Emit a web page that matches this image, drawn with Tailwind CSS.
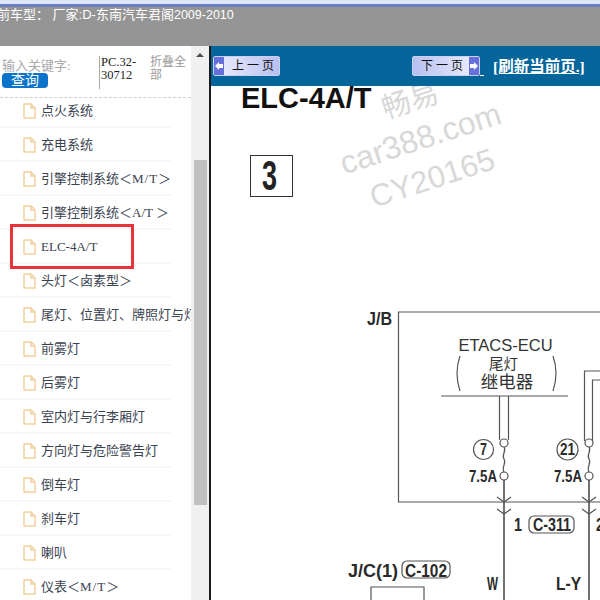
<!DOCTYPE html>
<html lang="zh">
<head>
<meta charset="utf-8">
<script src="https://cdn.jsdelivr.net/npm/@tailwindcss/browser@4"></script>
</head>
<body class="w-[600px] h-[600px] overflow-hidden bg-white font-['Liberation_Serif','Noto_Sans_CJK_SC',serif]">
<div class="flex flex-col h-[600px]">
  <!-- top -->
  <div class="h-[4px] bg-[#dce6f7]"></div>
  <div class="h-[3px] bg-[#6a7fc6]"></div>
  <div class="h-[39px] bg-[#959595] overflow-hidden pt-[1px]">
    <div class="text-white text-[13px] leading-[14px] whitespace-nowrap ml-[-3px] font-['Liberation_Sans','Noto_Sans_CJK_SC',sans-serif]">前车型： 厂家:D-东南汽车君阁<span class="text-[12.500px]">2009-2010</span></div>
  </div>
  <div class="flex h-[554px]">
    <!-- sidebar -->
    <div class="w-[191px] h-full overflow-hidden flex flex-col">
      <div class="h-[52px] flex-none border-b border-dashed border-[#cfcfcf] flex">
        <div class="w-[99px] pt-[13px] pl-[2px]">
          <div class="text-[#a8a8a8] text-[13px] leading-[14px] whitespace-nowrap">输入关键字:</div>
          <div class="w-[46px] h-[15px] bg-[#0b73c9] rounded-[4px] text-white text-[14px] leading-[15px] text-center">查询</div>
        </div>
        <div class="w-[51px] h-[33px] mt-[10px] border-l border-[#a8a8a8] pl-[1px] text-[12.500px] leading-[13px] text-[#222]">PC.32-<br>30712</div>
        <div class="w-[40px] pt-[10px] text-[#999] text-[12px] leading-[13px]">折叠全部</div>
      </div>
      <div class="flex-1 overflow-hidden text-[#3a4250] text-[13px]">
        <div class="h-[30px] flex items-center pl-[23px] pb-[2px] border-b-2 border-[#f7f7f7] w-[171px] whitespace-nowrap"><svg class="flex-none mr-[5px]" width="13" height="16" viewBox="0 0 13 16" fill="none" stroke="#f2cf9f" stroke-width="1.5"><path d="M1 1h7l4 4v10H1z"/><path d="M8 1v4h4"/></svg>点火系统</div>
        <div class="h-[34px] flex items-center pl-[23px] pt-[2px] border-b-2 border-[#f7f7f7] w-[171px] whitespace-nowrap"><svg class="flex-none mr-[5px]" width="13" height="16" viewBox="0 0 13 16" fill="none" stroke="#f2cf9f" stroke-width="1.5"><path d="M1 1h7l4 4v10H1z"/><path d="M8 1v4h4"/></svg>充电系统</div>
        <div class="h-[34px] flex items-center pl-[23px] pt-[2px] border-b-2 border-[#f7f7f7] w-[171px] whitespace-nowrap"><svg class="flex-none mr-[5px]" width="13" height="16" viewBox="0 0 13 16" fill="none" stroke="#f2cf9f" stroke-width="1.5"><path d="M1 1h7l4 4v10H1z"/><path d="M8 1v4h4"/></svg>引擎控制系统＜<span class="tracking-[1px]">M/T</span>＞</div>
        <div class="h-[34px] flex items-center pl-[23px] pt-[2px] border-b-2 border-[#f7f7f7] w-[171px] whitespace-nowrap"><svg class="flex-none mr-[5px]" width="13" height="16" viewBox="0 0 13 16" fill="none" stroke="#f2cf9f" stroke-width="1.5"><path d="M1 1h7l4 4v10H1z"/><path d="M8 1v4h4"/></svg>引擎控制系统＜A/T ＞</div>
        <div class="h-[34px] flex items-center pl-[23px] pt-[2px] border-b-2 border-[#f7f7f7] w-[171px] whitespace-nowrap"><svg class="flex-none mr-[5px]" width="13" height="16" viewBox="0 0 13 16" fill="none" stroke="#f2cf9f" stroke-width="1.5"><path d="M1 1h7l4 4v10H1z"/><path d="M8 1v4h4"/></svg>ELC-4A/T</div>
        <div class="h-[34px] flex items-center pl-[23px] pt-[2px] border-b-2 border-[#f7f7f7] w-[171px] whitespace-nowrap"><svg class="flex-none mr-[5px]" width="13" height="16" viewBox="0 0 13 16" fill="none" stroke="#f2cf9f" stroke-width="1.5"><path d="M1 1h7l4 4v10H1z"/><path d="M8 1v4h4"/></svg>头灯＜卤素型＞</div>
        <div class="h-[34px] flex items-center pl-[23px] pt-[2px] border-b-2 border-[#f7f7f7] w-[171px] whitespace-nowrap"><svg class="flex-none mr-[5px]" width="13" height="16" viewBox="0 0 13 16" fill="none" stroke="#f2cf9f" stroke-width="1.5"><path d="M1 1h7l4 4v10H1z"/><path d="M8 1v4h4"/></svg>尾灯、位置灯、牌照灯与灯</div>
        <div class="h-[34px] flex items-center pl-[23px] pt-[2px] border-b-2 border-[#f7f7f7] w-[171px] whitespace-nowrap"><svg class="flex-none mr-[5px]" width="13" height="16" viewBox="0 0 13 16" fill="none" stroke="#f2cf9f" stroke-width="1.5"><path d="M1 1h7l4 4v10H1z"/><path d="M8 1v4h4"/></svg>前雾灯</div>
        <div class="h-[34px] flex items-center pl-[23px] pt-[2px] border-b-2 border-[#f7f7f7] w-[171px] whitespace-nowrap"><svg class="flex-none mr-[5px]" width="13" height="16" viewBox="0 0 13 16" fill="none" stroke="#f2cf9f" stroke-width="1.5"><path d="M1 1h7l4 4v10H1z"/><path d="M8 1v4h4"/></svg>后雾灯</div>
        <div class="h-[34px] flex items-center pl-[23px] pt-[2px] border-b-2 border-[#f7f7f7] w-[171px] whitespace-nowrap"><svg class="flex-none mr-[5px]" width="13" height="16" viewBox="0 0 13 16" fill="none" stroke="#f2cf9f" stroke-width="1.5"><path d="M1 1h7l4 4v10H1z"/><path d="M8 1v4h4"/></svg>室内灯与行李厢灯</div>
        <div class="h-[34px] flex items-center pl-[23px] pt-[2px] border-b-2 border-[#f7f7f7] w-[171px] whitespace-nowrap"><svg class="flex-none mr-[5px]" width="13" height="16" viewBox="0 0 13 16" fill="none" stroke="#f2cf9f" stroke-width="1.5"><path d="M1 1h7l4 4v10H1z"/><path d="M8 1v4h4"/></svg>方向灯与危险警告灯</div>
        <div class="h-[34px] flex items-center pl-[23px] pt-[2px] border-b-2 border-[#f7f7f7] w-[171px] whitespace-nowrap"><svg class="flex-none mr-[5px]" width="13" height="16" viewBox="0 0 13 16" fill="none" stroke="#f2cf9f" stroke-width="1.5"><path d="M1 1h7l4 4v10H1z"/><path d="M8 1v4h4"/></svg>倒车灯</div>
        <div class="h-[34px] flex items-center pl-[23px] pt-[2px] border-b-2 border-[#f7f7f7] w-[171px] whitespace-nowrap"><svg class="flex-none mr-[5px]" width="13" height="16" viewBox="0 0 13 16" fill="none" stroke="#f2cf9f" stroke-width="1.5"><path d="M1 1h7l4 4v10H1z"/><path d="M8 1v4h4"/></svg>刹车灯</div>
        <div class="h-[34px] flex items-center pl-[23px] pt-[2px] border-b-2 border-[#f7f7f7] w-[171px] whitespace-nowrap"><svg class="flex-none mr-[5px]" width="13" height="16" viewBox="0 0 13 16" fill="none" stroke="#f2cf9f" stroke-width="1.5"><path d="M1 1h7l4 4v10H1z"/><path d="M8 1v4h4"/></svg>喇叭</div>
        <div class="h-[34px] flex items-center pl-[23px] pt-[2px] border-b-2 border-[#f7f7f7] w-[171px] whitespace-nowrap"><svg class="flex-none mr-[5px]" width="13" height="16" viewBox="0 0 13 16" fill="none" stroke="#f2cf9f" stroke-width="1.5"><path d="M1 1h7l4 4v10H1z"/><path d="M8 1v4h4"/></svg>仪表＜<span class="tracking-[1px]">M/T</span>＞</div>
      </div>
    </div>
    <!-- scrollbar -->
    <div class="w-[18px] h-full bg-[#f0f0f0] flex flex-col items-center">
      <div class="w-0 h-0 mt-[7px] border-l-[4px] border-r-[4px] border-b-[4px] border-l-transparent border-r-transparent border-b-[#505050]"></div>
      <div class="w-[13px] h-[345px] mt-[103px] bg-[#c0c0c0]"></div>
    </div>
    <div class="w-[2px] h-full bg-[#1a1a1a]"></div>
    <!-- main -->
    <div class="flex-1 h-full flex flex-col overflow-hidden">
      <div class="h-[40px] flex-none bg-[#04659b] flex items-start pt-[10px]">
        <div class="ml-[2px] w-[67px] h-[20px] border border-[#c8d0f0] rounded-[2px] bg-gradient-to-r from-[#eef0fc] to-[#b9bff0] flex items-center text-[12px] text-[#111]">
          <span class="w-[10px] h-full bg-[#6670dc] flex items-center justify-center flex-none"><svg width="8" height="8" viewBox="0 0 8 8" fill="#fff"><path d="M0 4l4-4v2h4v4H4v2z"/></svg></span>
          <span class="ml-[8px] whitespace-nowrap">上 一 页</span>
        </div>
        <div class="ml-[132px] w-[68px] h-[20px] border border-[#c8d0f0] rounded-[2px] bg-gradient-to-r from-[#b9bff0] to-[#eef0fc] flex items-center justify-between text-[12px] text-[#111]">
          <span class="ml-[8px] whitespace-nowrap">下 一 页</span>
          <span class="w-[10px] h-full bg-[#6670dc] flex items-center justify-center flex-none"><svg width="8" height="8" viewBox="0 0 8 8" fill="#fff"><path d="M8 4L4 0v2H0v4h4v2z"/></svg></span>
        </div>
        <span class="w-[4px] h-[1px] bg-white mt-[19px]"></span>
        <span class="ml-[9px] mt-[2px] text-white text-[15.500px] leading-[18px] font-bold underline whitespace-nowrap">[刷新当前页.]</span>
      </div>
      <div class="flex-1 overflow-hidden font-['Liberation_Sans','Noto_Sans_CJK_SC',sans-serif]">
        <svg width="389" height="514" viewBox="211 86 389 514" class="block">
          <text x="241" y="108" font-size="29" font-weight="700" fill="#111">ELC-4A/T</text>
          <rect x="250.500" y="155.500" width="42" height="41" fill="none" stroke="#333"/>
          <text x="262" y="190" font-size="42" font-weight="700" fill="#222" textLength="15" lengthAdjust="spacingAndGlyphs">3</text>
          <g fill="#d8d8d8" transform="rotate(-18 420 150)" text-anchor="middle">
            <text x="426" y="110" font-size="29">畅易</text>
            <text x="424" y="150" font-size="32">car388.com</text>
            <text x="423" y="191" font-size="31">CY20165</text>
          </g>
          <g fill="none" stroke="#555" stroke-width="1.200">
            <path d="M600 312H398.500V502H600"/>
            <path d="M441 396H568"/>
            <path d="M499.500 396V440M508.500 396V440"/>
            <path d="M600 371H584.500V441M600 380H592.500V441"/>
            <path d="M460 356q-6 17 0 35M553 356q6 17 0 35"/>
            <circle cx="504" cy="443" r="4"/>
            <circle cx="504" cy="476" r="4"/>
            <circle cx="589" cy="443" r="4"/>
            <circle cx="589" cy="476" r="4"/>
            <path d="M504 447c3 4-3 8 0 12s-3 8 0 13"/>
            <path d="M589 447c3 4-3 8 0 12s-3 8 0 13"/>
            <circle cx="483.500" cy="449.500" r="10"/>
            <circle cx="567.500" cy="449.500" r="10.500"/>
            <path d="M504 480V600M589 480V600" stroke="#444" stroke-width="1.500"/>
            <path d="M497 497l7 5 7-5M497 509l7 5 7-5M582 497l7 5 7-5M582 509l7 5 7-5"/>
            <rect x="529" y="516" width="45" height="17" rx="5"/>
            <rect x="402" y="561" width="48" height="17" rx="5"/>
            <path d="M371 600V587H424V600"/>
          </g>
          <g fill="#2a2a2a" font-weight="700">
            <text x="367" y="325" font-size="18" textLength="25" lengthAdjust="spacingAndGlyphs">J/B</text>
            <text x="480" y="455" font-size="17" textLength="7" lengthAdjust="spacingAndGlyphs">7</text>
            <text x="560" y="455" font-size="17" textLength="15" lengthAdjust="spacingAndGlyphs">21</text>
            <text x="469" y="482" font-size="16" textLength="28" lengthAdjust="spacingAndGlyphs">7.5A</text>
            <text x="554" y="482" font-size="16" textLength="28" lengthAdjust="spacingAndGlyphs">7.5A</text>
            <text x="514" y="531" font-size="18" textLength="8" lengthAdjust="spacingAndGlyphs">1</text>
            <text x="533" y="531" font-size="18" textLength="38" lengthAdjust="spacingAndGlyphs">C-311</text>
            <text x="596" y="531" font-size="18" textLength="8" lengthAdjust="spacingAndGlyphs">2</text>
            <text x="348" y="577" font-size="18" textLength="50" lengthAdjust="spacingAndGlyphs">J/C(1)</text>
            <text x="405" y="577" font-size="18" textLength="42" lengthAdjust="spacingAndGlyphs">C-102</text>
            <text x="487" y="590" font-size="18" textLength="11" lengthAdjust="spacingAndGlyphs">W</text>
            <text x="556" y="590" font-size="18" textLength="25" lengthAdjust="spacingAndGlyphs">L-Y</text>
          </g>
          <g fill="#333" text-anchor="middle">
            <text x="505.500" y="351" font-size="16.500">ETACS-ECU</text>
            <text x="503.500" y="369" font-size="14.500">尾灯</text>
            <text x="507" y="388" font-size="17.500">继电器</text>
          </g>
        </svg>
      </div>
    </div>
  </div>
</div>
<div class="absolute left-[10px] top-[224px] w-[124px] h-[45px] border-[3px] border-[#e8343a]"></div>
</body>
</html>
